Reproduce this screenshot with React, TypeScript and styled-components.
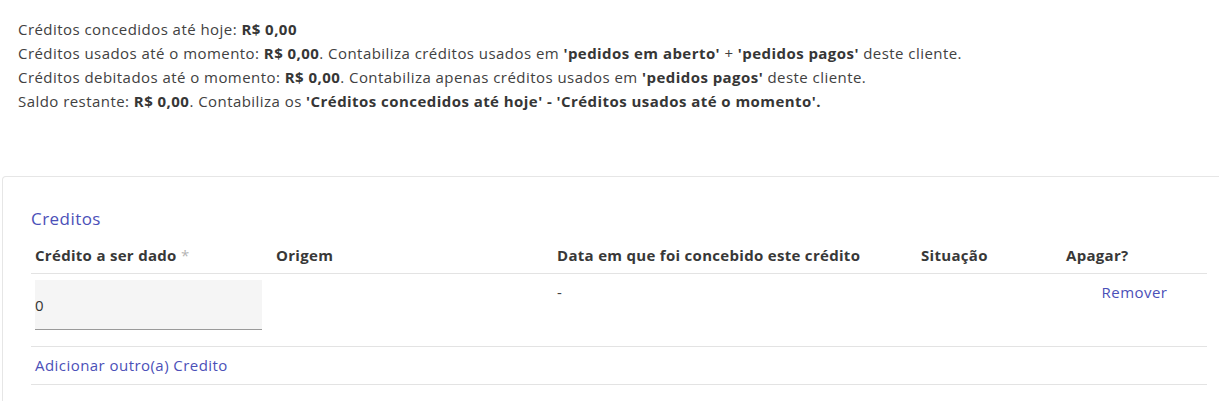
import styled, {createGlobalStyle} from "styled-components";

const GlobalStyle = createGlobalStyle`
  html, body {
    margin: 0;
    padding: 0;
    background: #fff;
    overflow: hidden;
  }

  body {
    font-family: "Open Sans", "Noto Sans", sans-serif;
    font-size: 15px;
    letter-spacing: 0.45px;
    color: #414141;
  }
`;

const Summary = styled.div`
  padding: 17px 0 0 18px;
  line-height: 24px;

  p {
    margin: 0;
  }

  b {
    font-weight: 700;
    color: #363636;
  }
`;

const Panel = styled.section`
  margin: 63px 0 0 2px;
  width: 1240px;
  border: 1px solid #e6e6e6;
  border-bottom: none;
  border-radius: 4px 4px 0 0;
  padding: 30px 0 16px 28px;
  box-sizing: border-box;
`;

const Title = styled.h3`
  margin: 0 0 5px 0;
  font-size: 17px;
  font-weight: 400;
  line-height: 24px;
  color: #4b50b8;
`;

const Table = styled.table`
  width: 1176px;
  border-collapse: collapse;
  table-layout: fixed;
`;

const Th = styled.th<{ $w: number }>`
  width: ${p => p.$w}px;
  box-sizing: border-box;
  text-align: left;
  font-weight: 700;
  letter-spacing: 0.3px;
  color: #383838;
  padding: 7px 4px 6px 4px;
  line-height: 24px;
  border-bottom: 1px solid #e3e3e3;

  span {
    color: #b5b5b5;
    font-weight: 400;
  }
`;

const Td = styled.td<{ $center?: boolean }>`
  vertical-align: top;
  padding: 6px 4px 16px 4px;
  line-height: 24px;
  border-bottom: 1px solid #e3e3e3;
  text-align: ${p => (p.$center ? "center" : "left")};
`;

const FooterCell = styled.td`
  padding: 6px 4px 7px 4px;
  line-height: 24px;
  border-bottom: 1px solid #e3e3e3;
`;

const Input = styled.input`
  display: block;
  width: 227px;
  height: 50px;
  box-sizing: border-box;
  border: none;
  border-bottom: 1px solid #9a9a9a;
  background: #f5f5f5;
  padding: 0;
  font-family: inherit;
  font-size: 15px;
  color: #333;
  outline: none;
`;

const LinkText = styled.a`
  color: #4b50b8;
  text-decoration: none;
  cursor: pointer;
`;

export default function App() {
  return (
    <>
      <GlobalStyle/>
      <Summary>
        <p>Créditos concedidos até hoje: <b>R$ 0,00</b></p>
        <p>Créditos usados até o momento: <b>R$ 0,00</b>. Contabiliza créditos usados em <b>'pedidos em aberto'</b> + <b>'pedidos pagos'</b> deste cliente.</p>
        <p>Créditos debitados até o momento: <b>R$ 0,00</b>. Contabiliza apenas créditos usados em <b>'pedidos pagos'</b> deste cliente.</p>
        <p>Saldo restante: <b>R$ 0,00</b>. Contabiliza os <b>'Créditos concedidos até hoje' - 'Créditos usados até o momento'.</b></p>
      </Summary>
      <Panel>
        <Title>Creditos</Title>
        <Table>
          <thead>
          <tr>
            <Th $w={241}>Crédito a ser dado <span>*</span></Th>
            <Th $w={281}>Origem</Th>
            <Th $w={364}>Data em que foi concebido este crédito</Th>
            <Th $w={145}>Situação</Th>
            <Th $w={145}>Apagar?</Th>
          </tr>
          </thead>
          <tbody>
          <tr>
            <Td><Input defaultValue="0"/></Td>
            <Td></Td>
            <Td>-</Td>
            <Td></Td>
            <Td $center><LinkText>Remover</LinkText></Td>
          </tr>
          <tr>
            <FooterCell colSpan={5}><LinkText>Adicionar outro(a) Credito</LinkText></FooterCell>
          </tr>
          </tbody>
        </Table>
      </Panel>
    </>
  );
}
